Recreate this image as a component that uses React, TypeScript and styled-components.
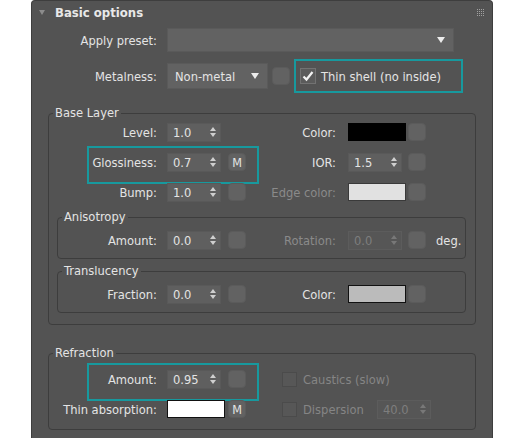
import React from 'react';
import styled, { createGlobalStyle, css } from 'styled-components';

const GlobalStyle = createGlobalStyle`
  html, body { margin: 0; padding: 0; background: #ffffff; overflow: hidden; }
  body {
    font-family: "DejaVu Sans Condensed", "DejaVu Sans", sans-serif;
    font-stretch: condensed;
    font-size: 12.8px;
  }
  * { box-sizing: border-box; }
`;

const TEAL = '#17999e';
const TEXT = '#e4e4e4';
const DIM = '#8a8a8a';

const Page = styled.div`
  width: 526px;
  height: 438px;
  padding-left: 31px;
  overflow: hidden;
`;

const Panel = styled.div`
  width: 462px;
  min-height: 460px;
  background: #535353;
  border: 1px solid #3e3e3e;
  border-bottom: none;
  border-radius: 4px 4px 0 0;
  color: ${TEXT};
  display: flex;
  flex-direction: column;
`;

const Header = styled.div`
  height: 23px;
  display: flex;
  align-items: center;
  padding: 0 7px;
`;

const Caret = styled.span`
  width: 0;
  height: 0;
  border-left: 3px solid transparent;
  border-right: 3px solid transparent;
  border-top: 5px solid #8c8c8c;
  margin-right: 10px;
`;

const Title = styled.span`
  font-weight: bold;
  font-size: 13px;
  color: #e8e8e8;
  flex: 1;
`;

const Row = styled.div<{ $top?: number; $hl?: number }>`
  position: relative;
  display: flex;
  align-items: center;
  min-height: 20px;
  margin-top: ${p => p.$top ?? 0}px;
  ${p =>
    p.$hl !== undefined &&
    css`
      &::after {
        content: '';
        position: absolute;
        left: ${p.$hl}px;
        top: -6px;
        width: 168px;
        height: 34px;
        border: 2px solid ${TEAL};
        pointer-events: none;
      }
    `}
`;

const Label = styled.span<{ $w: number; $gap?: number; $dim?: boolean }>`
  flex: none;
  width: ${p => p.$w}px;
  margin-right: ${p => p.$gap ?? 10}px;
  text-align: right;
  white-space: nowrap;
  color: ${p => (p.$dim ? DIM : TEXT)};
`;

const Combo = styled.div<{ $w: number; $h: number }>`
  flex: none;
  width: ${p => p.$w}px;
  height: ${p => p.$h}px;
  background: #626262;
  border: 1px solid #5a5a5a;
  display: flex;
  align-items: center;
  justify-content: space-between;
  padding: 0 8px 0 7px;
  color: ${TEXT};
`;

const DownArrow = styled.span`
  width: 0;
  height: 0;
  border-left: 4px solid transparent;
  border-right: 4px solid transparent;
  border-top: 6px solid #ececec;
`;

const Slot = styled.div<{ $w?: number }>`
  flex: none;
  width: ${p => p.$w ?? 59}px;
  display: flex;
  align-items: center;
`;

const SpinBox = styled.div<{ $w?: number; $off?: boolean }>`
  width: ${p => p.$w ?? 54}px;
  height: 19px;
  background: ${p => (p.$off ? '#565656' : '#5f5f5f')};
  border: 1px solid ${p => (p.$off ? '#5c5c5c' : '#595959')};
  display: flex;
  align-items: center;
  justify-content: space-between;
  padding: 0 4px 0 5px;
  color: ${p => (p.$off ? '#7e7e7e' : TEXT)};
`;

const Swatch = styled.div<{ $c: string; $b: string }>`
  width: 58px;
  height: 18px;
  background: ${p => p.$c};
  border: 1px solid ${p => p.$b};
`;

const SqBtn = styled.div<{ $ml?: number; $hidden?: boolean }>`
  flex: none;
  width: 18px;
  height: 18px;
  margin-left: ${p => p.$ml ?? 2}px;
  border-radius: 4px;
  background: #626262;
  border: 1px solid #5b5b5b;
  display: flex;
  align-items: center;
  justify-content: center;
  font-size: 12.5px;
  color: ${TEXT};
  visibility: ${p => (p.$hidden ? 'hidden' : 'visible')};
`;

const Unit = styled.span`
  margin-left: 10px;
  color: ${TEXT};
`;

const Group = styled.fieldset<{ $ml: number; $mr: number; $pt: number; $pb: number; $mt: number }>`
  margin: ${p => p.$mt}px ${p => p.$mr}px 0 ${p => p.$ml}px;
  padding: ${p => p.$pt}px 0 ${p => p.$pb}px 0;
  border: 1px solid #3d3d3d;
  border-radius: 4px;
  min-inline-size: 0;
  display: flex;
  flex-direction: column;
  gap: 10px;
`;

const Legend = styled.legend`
  margin-left: 4px;
  padding: 0 2px;
  line-height: 14px;
  color: ${TEXT};
`;

const HlBox = styled.div`
  flex: none;
  width: 169px;
  height: 34px;
  margin-left: 4px;
  border: 2px solid ${TEAL};
  display: flex;
  align-items: center;
  padding-left: 4px;
`;

const Check = styled.div<{ $on?: boolean; $ml?: number }>`
  flex: none;
  width: ${p => (p.$on ? 16 : 15)}px;
  height: ${p => (p.$on ? 16 : 15)}px;
  margin-left: ${p => p.$ml ?? 0}px;
  background: ${p => (p.$on ? '#5b5b5b' : '#575757')};
  border: 1px solid ${p => (p.$on ? '#727272' : '#4b4b4b')};
  display: flex;
  align-items: center;
  justify-content: center;
`;

const CheckText = styled.span<{ $dim?: boolean; $w?: number; $ml?: number }>`
  margin-left: ${p => p.$ml ?? 6}px;
  white-space: nowrap;
  color: ${p => (p.$dim ? '#858585' : TEXT)};
  ${p => p.$w !== undefined && css`width: ${p.$w}px; flex: none;`}
`;

const Grip = () => (
  <svg width="8" height="8" viewBox="0 0 8 8">
    {[0, 1, 2, 3].flatMap(r =>
      [0, 1, 2, 3].map(c => <rect key={`${r}-${c}`} x={c * 2} y={r * 2} width="1" height="1" fill="#a0a0a0" />)
    )}
  </svg>
);

const Arrows = ({ off }: { off?: boolean }) => (
  <svg width="6" height="10" viewBox="0 0 6 10">
    <polygon points="0,4 3,0 6,4" fill={off ? '#787878' : '#cfcfcf'} />
    <polygon points="0,6 6,6 3,10" fill={off ? '#787878' : '#cfcfcf'} />
  </svg>
);

const Tick = () => (
  <svg width="12" height="12" viewBox="0 0 12 12">
    <path d="M1.5 6.5 L4.5 9.5 L10.5 2" stroke="#f2f2f2" strokeWidth="2.2" fill="none" />
  </svg>
);

const Spinner = ({ v, off, w }: { v: string; off?: boolean; w?: number }) => (
  <SpinBox $off={off} $w={w}>
    <span>{v}</span>
    <Arrows off={off} />
  </SpinBox>
);

export default function App() {
  return (
    <Page>
      <GlobalStyle />
      <Panel>
        <Header>
          <Caret />
          <Title>Basic options</Title>
          <Grip />
        </Header>

        <Row $top={4}>
          <Label $w={125}>Apply preset:</Label>
          <Combo $w={287} $h={24}>
            <span />
            <DownArrow />
          </Combo>
        </Row>

        <Row $top={7}>
          <Label $w={125}>Metalness:</Label>
          <Combo $w={101} $h={26}>
            <span>Non-metal</span>
            <DownArrow />
          </Combo>
          <SqBtn $ml={4} />
          <HlBox>
            <Check $on>
              <Tick />
            </Check>
            <CheckText $ml={5}>Thin shell (no inside)</CheckText>
          </HlBox>
        </Row>

        <Group $mt={13} $ml={16} $mr={16} $pt={2} $pb={11}>
          <Legend>Base Layer</Legend>
          <Row>
            <Label $w={108}>Level:</Label>
            <Slot><Spinner v="1.0" /></Slot>
            <SqBtn $hidden />
            <Label $w={90} $gap={12}>Color:</Label>
            <Slot $w={58}><Swatch $c="#000000" $b="#000000" /></Slot>
            <SqBtn />
          </Row>
          <Row $hl={38}>
            <Label $w={108}>Glossiness:</Label>
            <Slot><Spinner v="0.7" /></Slot>
            <SqBtn>M</SqBtn>
            <Label $w={90} $gap={12}>IOR:</Label>
            <Slot $w={58}><Spinner v="1.5" /></Slot>
            <SqBtn />
          </Row>
          <Row>
            <Label $w={108}>Bump:</Label>
            <Slot><Spinner v="1.0" /></Slot>
            <SqBtn />
            <Label $w={90} $gap={12} $dim>Edge color:</Label>
            <Slot $w={58}><Swatch $c="#e1e1e1" $b="#3a3a3a" /></Slot>
            <SqBtn />
          </Row>

          <Group $mt={-2} $ml={8} $mr={9} $pt={6} $pb={8}>
            <Legend>Anisotropy</Legend>
            <Row>
              <Label $w={99}>Amount:</Label>
              <Slot><Spinner v="0.0" /></Slot>
              <SqBtn />
              <Label $w={90} $gap={12} $dim>Rotation:</Label>
              <Slot $w={58}><Spinner v="0.0" off /></Slot>
              <SqBtn />
              <Unit>deg.</Unit>
            </Row>
          </Group>

          <Group $mt={-5} $ml={8} $mr={9} $pt={6} $pb={8}>
            <Legend>Translucency</Legend>
            <Row>
              <Label $w={99}>Fraction:</Label>
              <Slot><Spinner v="0.0" /></Slot>
              <SqBtn />
              <Label $w={90} $gap={12}>Color:</Label>
              <Slot $w={58}><Swatch $c="#bbbbbb" $b="#111111" /></Slot>
              <SqBtn />
            </Row>
          </Group>
        </Group>

        <Group $mt={21} $ml={16} $mr={16} $pt={9} $pb={10}>
          <Legend>Refraction</Legend>
          <Row $hl={38}>
            <Label $w={108}>Amount:</Label>
            <Slot><Spinner v="0.95" /></Slot>
            <SqBtn />
            <Check $ml={36} />
            <CheckText $dim>Caustics (slow)</CheckText>
          </Row>
          <Row>
            <Label $w={108}>Thin absorption:</Label>
            <Slot><Swatch $c="#ffffff" $b="#111111" /></Slot>
            <SqBtn>M</SqBtn>
            <Check $ml={36} />
            <CheckText $dim $w={74}>Dispersion</CheckText>
            <Spinner v="40.0" off />
          </Row>
        </Group>
      </Panel>
    </Page>
  );
}
